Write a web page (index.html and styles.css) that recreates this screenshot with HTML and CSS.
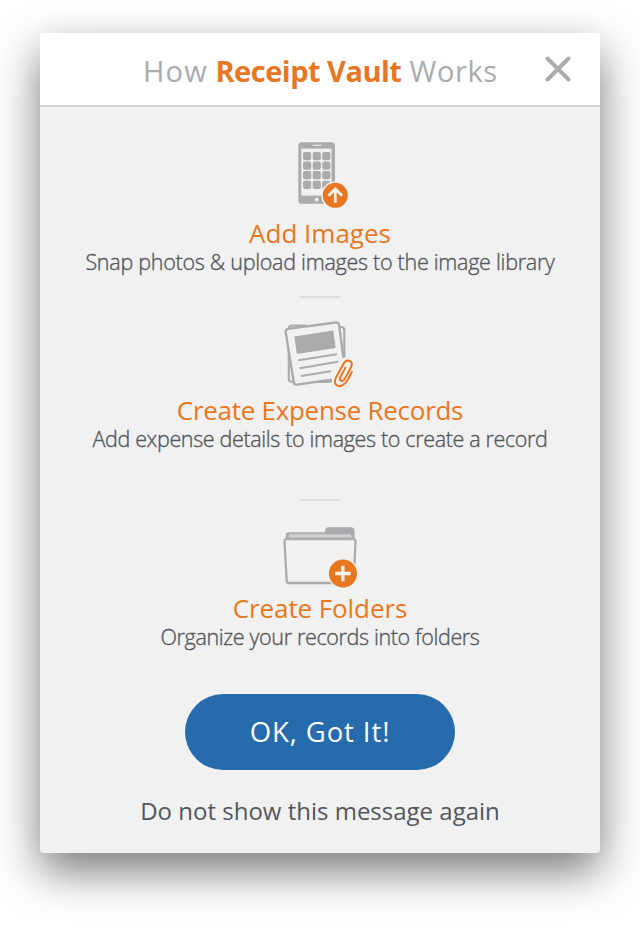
FILE: index.html
```html
<!DOCTYPE html>
<html lang="en">
<head>
<meta charset="utf-8">
<title>How Receipt Vault Works</title>
<link rel="stylesheet" href="styles.css">
</head>
<body>
<main class="dialog">
  <header class="dialog-header">
    <h1 class="title"><span class="t-how">How</span> <strong>Receipt Vault</strong> <span class="t-works">Works</span></h1>
    <button class="close" aria-label="Close">
      <svg width="26" height="26" viewBox="0 0 26 26"><path d="M2.5 2.5 23.5 23.5M23.5 2.5 2.5 23.5" fill="none" stroke="#a9abad" stroke-width="4" stroke-linecap="round"/></svg>
    </button>
  </header>
  <section class="step step-images">
    <svg class="icon" width="80" height="90" viewBox="0 0 80 90">
      <rect x="18.3" y="12.3" width="36.7" height="61.5" rx="3.5" fill="#a9abad"/>
      <rect x="21.3" y="18.6" width="30.2" height="47" fill="#f1f1f1"/>
      <path d="M33 15.4h8" stroke="#e4e4e5" stroke-width="1.1" stroke-linecap="round"/>
      <circle cx="36.7" cy="69.7" r="1.9" fill="#f1f1f1"/>
      <g fill="#a9abad">
        <rect x="23" y="22" width="8.2" height="8.2" rx="2"/><rect x="32.7" y="22" width="8.2" height="8.2" rx="2"/><rect x="42.2" y="22" width="8.2" height="8.2" rx="2"/>
        <rect x="23" y="31.6" width="8.2" height="8.2" rx="2"/><rect x="32.7" y="31.6" width="8.2" height="8.2" rx="2"/><rect x="42.2" y="31.6" width="8.2" height="8.2" rx="2"/>
        <rect x="23" y="41.1" width="8.2" height="8.2" rx="2"/><rect x="32.7" y="41.1" width="8.2" height="8.2" rx="2"/><rect x="42.2" y="41.1" width="8.2" height="8.2" rx="2"/>
        <rect x="23" y="50.7" width="8.2" height="8.2" rx="2"/><rect x="32.7" y="50.7" width="8.2" height="8.2" rx="2"/><rect x="42.2" y="50.7" width="8.2" height="8.2" rx="2"/>
      </g>
      <circle cx="55.3" cy="65.3" r="14" fill="#f1f1f1"/>
      <circle cx="55.3" cy="65.3" r="12.5" fill="#e87722"/>
      <path d="M55.3 72.7V59.5M48.4 65.8l6.9-6.9 6.9 6.9" fill="none" stroke="#f5f3f1" stroke-width="2.8"/>
    </svg>
    <h2>Add Images</h2>
    <p>Snap photos &amp; upload images to the image library</p>
  </section>
  <div class="divider"></div>
  <section class="step step-records">
    <svg class="icon" width="100" height="85" viewBox="0 0 100 85">
      <path d="M36 15.6H21.5a2.7 2.7 0 0 0-2.7 2.7V69a2.7 2.7 0 0 0 2.7 2.7H61M69 17h2.4a2.9 2.9 0 0 1 2.9 2.9V47" fill="none" stroke="#a9abad" stroke-width="2.2"/>
      <path d="M33 72.3 61.5 68.5v3.6z" fill="#a9abad" stroke="#a9abad"/>
      <path d="M18.2 18.9 65.8 12.5a3 3 0 0 1 3.3 2.5L73.7 49 62.5 68.5 27.8 74.6a3 3 0 0 1-3.3-2.5L15.7 22.2a3 3 0 0 1 2.5-3.3z" fill="#f1f1f1"/>
      <path d="M73.5 48 69.1 15a3 3 0 0 0-3.3-2.5L18.2 18.9a3 3 0 0 0-2.5 3.3l8.1 49.9a3 3 0 0 0 3.3 2.5L61.5 69.6" fill="none" stroke="#a9abad" stroke-width="2.4"/>
      <path d="M24.3 26.4 63.2 20.6 65.6 38.1 26.9 43.9z" fill="#a9abad"/>
      <path d="M28.2 50.2 67 44.3M29.6 58.2 68.2 51.8M31 66 60.8 61.3" fill="none" stroke="#a9abad" stroke-width="2"/>
      <path d="M81 61.5 76.7 70.4C74.2 75.4 68.6 76.8 66.2 74.5 64.1 72.5 65.2 69.6 66.4 67.1L72.8 54.1C74.3 51 77.2 49.9 79.5 51 82 52.3 82.1 54.9 80.8 57.5L74.6 69.1C73.7 71 71.9 71.4 70.8 70.5 69.7 69.6 69.9 68.1 70.6 66.6L75.7 56.9" fill="none" stroke="#f1f1f1" stroke-width="5"/>
      <path d="M82.2 61.2 77.4 70.4C74.5 75.8 69.1 77.1 66.3 74.9 64 73 64.7 70.2 66 67.6L73.2 54.2C74.9 51 77.6 50 79.8 51 82.2 52.1 82.3 54.8 80.9 57.5L74.8 68.9C73.7 71 71.8 71.4 70.6 70.5 69.5 69.6 69.8 68.1 70.6 66.6L75.8 56.9" fill="none" stroke="#e87722" stroke-width="2"/>
    </svg>
    <h2>Create Expense Records</h2>
    <p>Add expense details to images to create a record</p>
  </section>
  <div class="divider"></div>
  <section class="step step-folders">
    <svg class="icon" width="100" height="80" viewBox="0 0 100 80">
      <path d="M55 18v-1.8q0-3.9 3.7-3.9h22q3.8 0 3.8 3.7V24H55z" fill="#a9abad"/>
      <path d="M15.8 24v-4q0-2.8 2.8-2.8H56.5l5 1H81l4 5z" fill="#a9abad"/>
      <path d="M19.5 19.3H80.5l1.5 3.3H18.5z" fill="#cfd0d2"/>
      <path d="M16.3 24.2H83.6q2 0 1.9 2.3L83.8 66q-.1 2-2.3 2H18.9q-2.1 0-2.2-2L14.5 26.5q-.2-2.3 1.8-2.3z" fill="#f1f1f1" stroke="#a9abad" stroke-width="2.3"/>
      <circle cx="73" cy="58.5" r="15.4" fill="#f1f1f1"/>
      <circle cx="73" cy="58.5" r="14" fill="#e87722"/>
      <path d="M65.2 58.5h15.4M72.9 50.8v15.4" stroke="#f5f3f1" stroke-width="3.3"/>
    </svg>
    <h2>Create Folders</h2>
    <p>Organize your records into folders</p>
  </section>
  <button class="ok">OK, Got It!</button>
  <a class="dismiss">Do not show this message again</a>
</main>
</body>
</html>
```
FILE: styles.css
```css
* { box-sizing: border-box; }
body {
  margin: 0;
  padding: 33px 40px 0;
  height: 940px;
  overflow: hidden;
  background: #fff;
  font-family: "Open Sans", "Noto Sans", sans-serif;
  color: #53565a;
}
.dialog {
  display: flex;
  flex-direction: column;
  align-items: center;
  width: 560px;
  height: 820px;
  border-radius: 4px;
  background: #f1f1f1;
  box-shadow: 0 18px 45px rgba(0, 0, 0, .53);
}
.dialog-header {
  display: grid;
  grid-template-columns: 1fr 26px;
  align-items: center;
  width: 100%;
  height: 74px;
  padding: 0 29px 0 103px;
  border-bottom: 2px solid #d5d5d6;
  border-radius: 4px 4px 0 0;
  background: #fff;
}
h1, h2, p { margin: 0; white-space: nowrap; }
.title {
  font-size: 29px;
  line-height: 40px;
  font-weight: 400;
  color: #a9abad;
  padding-top: 3px;
}
.title strong { font-weight: 700; letter-spacing: -.5px; color: #e87722; }
.t-how { letter-spacing: 1.2px; }
.t-works { margin-left: .5px; letter-spacing: .6px; }
button { border: 0; padding: 0; font-family: inherit; }
.close { width: 26px; height: 26px; background: none; }
.close svg { display: block; }
.step { display: flex; flex-direction: column; align-items: center; }
.icon { display: block; }
.step h2 { margin-top: -2px; font-size: 26px; line-height: 30px; font-weight: 400; color: #e87722; }
.step p {
  font-size: 21.5px;
  line-height: 28px;
  font-weight: 300;
  letter-spacing: -.35px;
  -webkit-text-stroke: .35px #53565a;
}
.step-images { padding-top: 23px; height: 189px; }
.step-images p { letter-spacing: -.27px; }
.step-records { padding-top: 12px; height: 201px; }
.step-records h2 { margin-top: 0; letter-spacing: -.28px; }
.step-folders { padding-top: 14px; height: 193px; }
.step-folders h2 { letter-spacing: -.1px; }
.step-folders p { line-height: 27px; }
.ok {
  width: 270px;
  height: 76px;
  border-radius: 38px;
  background: #266cad;
  color: #fff;
  font-size: 27.5px;
  letter-spacing: .9px;
  line-height: 76px;
}
.divider { width: 40px; height: 2px; background: #dededf; }
.dismiss { margin-top: 25px; font-size: 24px; line-height: 32px; white-space: nowrap; }
```
